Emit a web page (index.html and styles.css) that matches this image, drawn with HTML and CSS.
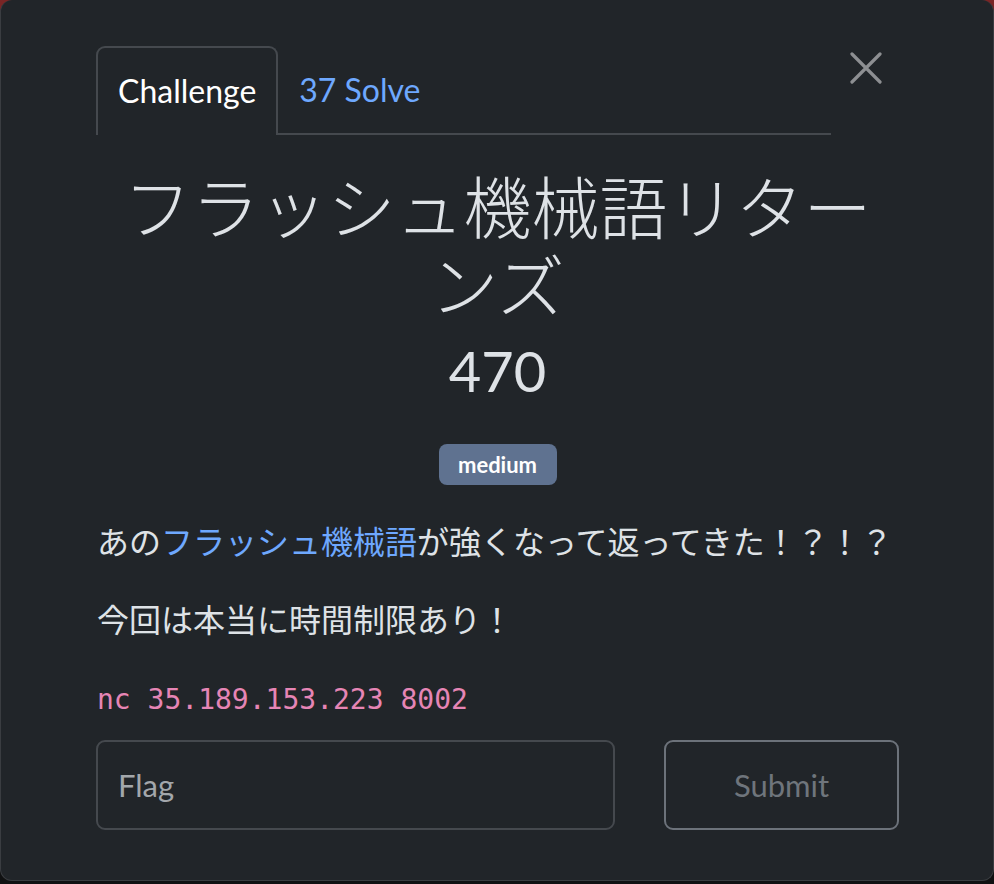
FILE: index.html
```html
<!DOCTYPE html>
<html lang="ja">
<head>
<meta charset="utf-8">
<link rel="stylesheet" href="styles.css">
</head>
<body>
<div class="modal">
  <div class="header">
    <nav class="tabs">
      <span class="tab active">Challenge</span>
      <span class="tab link">37 Solve</span>
      <span class="tab-rest"></span>
    </nav>
    <button class="close" aria-label="Close">
      <svg width="32" height="32" viewBox="0 0 32 32"><path d="M2 2 L30 30 M30 2 L2 30" stroke="#8d8f92" stroke-width="3.2" stroke-linecap="round"/></svg>
    </button>
  </div>
  <h1 class="title">フラッシュ機械語リターンズ</h1>
  <div class="points">470</div>
  <div class="badge-row"><span class="badge">medium</span></div>
  <p class="desc">あの<a class="blue">フラッシュ機械語</a>が強くなって返ってきた！？！？</p>
  <p class="desc">今回は本当に時間制限あり！</p>
  <code class="cmd">nc 35.189.153.223 8002</code>
  <form class="flag-form">
    <input class="flag-input" type="text" placeholder="Flag">
    <button class="submit" type="button">Submit</button>
  </form>
</div>
</body>
</html>
```
FILE: styles.css
```css
html, body {
  margin: 0;
  padding: 0;
}
body {
  width: 994px;
  height: 884px;
  background: linear-gradient(#7a2525 0 14px, #101112 14px);
  overflow: hidden;
  font-family: Lato, "Noto Sans CJK JP", sans-serif;
}
.modal {
  box-sizing: border-box;
  width: 994px;
  height: 881px;
  background: #212529;
  border: 1px solid #3a3d41;
  border-top: none;
  border-radius: 12px;
  padding: 46px 94px 0 95px;
  color: #dee2e6;
}
.header {
  display: flex;
  align-items: flex-start;
}
.tabs {
  display: flex;
  width: 735px;
  height: 89px;
}
.tab {
  box-sizing: border-box;
  height: 89px;
  display: flex;
  align-items: center;
  font-size: 32px;
  padding: 0 20px;
  border-bottom: 2px solid #45494e;
}
.tab.active {
  color: #ffffff;
  border: 2px solid #45494e;
  border-bottom: none;
  border-radius: 9px 9px 0 0;
  padding-bottom: 2px;
}
.tab.link {
  color: #6ea8fe;
  padding: 0 0 0 21px;
}
.tab-rest {
  flex: 1;
  border-bottom: 2px solid #45494e;
}
.close {
  margin: 4px 0 0 17px;
  width: 36px;
  height: 36px;
  padding: 0;
  background: none;
  border: none;
  display: flex;
  align-items: center;
  justify-content: center;
}
.title {
  margin: 31px auto 0;
  width: 780px;
  text-align: center;
  font-family: "Noto Sans CJK JP", sans-serif;
  font-weight: 300;
  font-size: 68px;
  line-height: 78px;
  color: #dee2e6;
}
.points {
  margin-top: 15px;
  text-align: center;
  font-size: 56px;
  line-height: 67px;
  color: #dee2e6;
}
.badge-row {
  margin-top: 40px;
  display: flex;
  justify-content: center;
}
.badge {
  box-sizing: border-box;
  width: 118px;
  height: 41px;
  display: flex;
  align-items: center;
  justify-content: center;
  background: #5f7290;
  border-radius: 8px;
  color: #ffffff;
  font-weight: 700;
  font-size: 22px;
}
.desc {
  margin: 31px 0 0 1px;
  font-family: "Noto Sans CJK JP", sans-serif;
  font-size: 32px;
  line-height: 48px;
  color: #dee2e6;
}
.desc + .desc {
  margin-top: 30px;
}
.blue {
  color: #6ea8fe;
}
.cmd {
  display: block;
  margin: 38px 0 0 1px;
  font-family: "DejaVu Sans Mono", monospace;
  font-size: 28px;
  line-height: 40px;
  color: #e685b5;
}
.flag-form {
  margin-top: 20px;
  display: flex;
  gap: 49px;
}
.flag-input {
  box-sizing: border-box;
  flex: none;
  width: 519px;
  height: 90px;
  background: #212529;
  border: 2px solid #45494e;
  border-radius: 9px;
  padding: 0 20px;
  font-family: Lato, sans-serif;
  font-size: 31px;
  color: #dee2e6;
}
.flag-input::placeholder {
  color: #a3a7ab;
}
.submit {
  box-sizing: border-box;
  flex: none;
  width: 235px;
  height: 90px;
  background: transparent;
  border: 2px solid #6c727a;
  border-radius: 9px;
  font-family: Lato, sans-serif;
  font-size: 31px;
  color: #6f757c;
}
```
